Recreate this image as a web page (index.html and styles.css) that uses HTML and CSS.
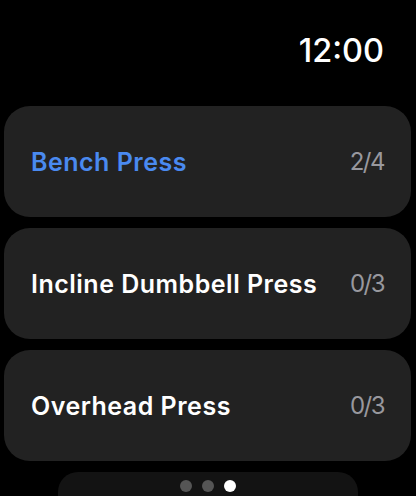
FILE: index.html
```html
<!DOCTYPE html>
<html>
<head>
<meta charset="utf-8">
<link rel="stylesheet" href="styles.css">
</head>
<body>
<div class="screen">
  <header class="top">
    <span class="time">12:00</span>
  </header>
  <main class="list">
    <div class="card">
      <span class="name active">Bench Press</span>
      <span class="count">2/4</span>
    </div>
    <div class="card">
      <span class="name">Incline Dumbbell Press</span>
      <span class="count">0/3</span>
    </div>
    <div class="card">
      <span class="name">Overhead Press</span>
      <span class="count">0/3</span>
    </div>
  </main>
  <footer class="pager">
    <span class="dot"></span>
    <span class="dot"></span>
    <span class="dot on"></span>
  </footer>
</div>
</body>
</html>
```
FILE: styles.css
```css
html, body {
  margin: 0;
  padding: 0;
  background: #000;
  width: 416px;
  height: 496px;
  overflow: hidden;
}
.screen {
  font-family: Inter, "Noto Sans", sans-serif;
  color: #fff;
}
.top {
  height: 106px;
  box-sizing: border-box;
  padding: 35px 32px 0 0;
  display: flex;
  justify-content: flex-end;
  align-items: flex-start;
}
.time {
  font-size: 32.5px;
  line-height: 32px;
  font-weight: 500;
}
.list {
  display: flex;
  flex-direction: column;
  gap: 11px;
  padding: 0 5px 0 4px;
}
.card {
  height: 111px;
  background: #222222;
  border-radius: 26px;
  display: flex;
  align-items: center;
  justify-content: space-between;
  padding: 0 27px 0 27px;
}
.name {
  font-size: 25px;
  font-weight: 600;
  letter-spacing: 0.5px;
  color: #fff;
}
.name.active {
  color: #4a8af0;
}
.count {
  font-size: 24px;
  font-weight: 400;
  letter-spacing: -1.5px;
  color: #98989e;
}
.pager {
  margin: 11px auto 0;
  width: 300px;
  height: 40px;
  background: #131313;
  border-radius: 20px 20px 0 0;
  display: flex;
  justify-content: center;
  gap: 10px;
  padding-top: 8px;
  box-sizing: border-box;
}
.dot {
  width: 12px;
  height: 12px;
  border-radius: 50%;
  background: #555;
}
.dot.on {
  background: #fff;
}
```
